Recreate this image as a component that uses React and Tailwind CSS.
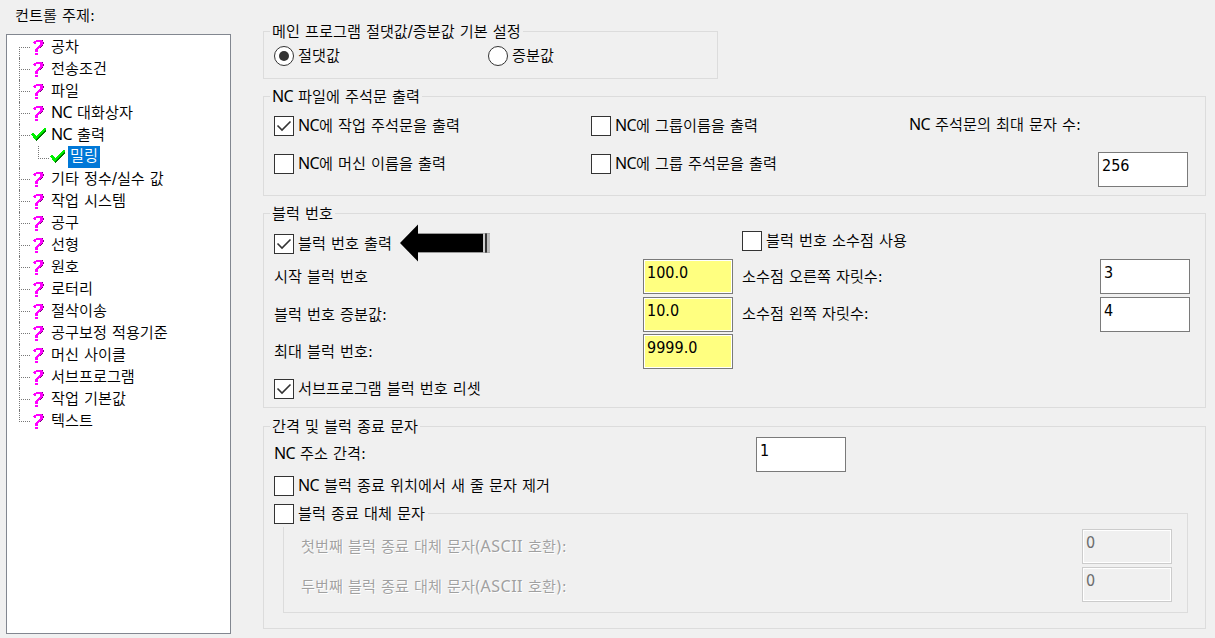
import React from "react";

const topics = [
  { label: "공차" },
  { label: "전송조건" },
  { label: "파일" },
  { label: "NC 대화상자" },
  { label: "NC 출력", checked: true },
  { label: "밀링", checked: true, child: true },
  { label: "기타 정수/실수 값" },
  { label: "작업 시스템" },
  { label: "공구" },
  { label: "선형" },
  { label: "원호" },
  { label: "로터리" },
  { label: "절삭이송" },
  { label: "공구보정 적용기준" },
  { label: "머신 사이클" },
  { label: "서브프로그램" },
  { label: "작업 기본값" },
  { label: "텍스트" },
];

// Latin runs are set slightly larger than the Hangul around them
function Text({ children }) {
  return children.split(/(NC|ASCII|[/:()])/).map((part, i) => {
    if (part === "ASCII") {
      return (
        <span key={i} className="font-['Noto_Sans'] text-[16px] font-normal tracking-[0.5px]">
          {part}
        </span>
      );
    }
    if (part === "NC") {
      return (
        <span key={i} className="font-['Noto_Sans'] text-[16px] leading-[0] font-normal tracking-[-0.6px]">
          {part}
        </span>
      );
    }
    return i % 2 ? (
      <span key={i} className="text-[16.3px]">
        {part}
      </span>
    ) : (
      part
    );
  });
}

function QuestionIcon() {
  return (
    <svg className="block" width="12" height="16" viewBox="0 0 12 16" shapeRendering="crispEdges">
      <path
        d="M3 1h6v1h-6zM1 2h9v1h-9zM0 3h3v1h-3zM1 4h2v1h-2zM7 3h3v3h-3zM6 6h3v1h-3zM5 7h3v1h-3zM4 8h3v1h-3zM3 9h3v1h-3zM2 10h3v3h-3zM2 14h3v2h-3z"
        fill="#ff00ff"
      />
      <path d="M9 1h1v1h-1zM10 3h1v2h-1zM9 6h1v1h-1zM8 7h1v1h-1zM7 8h1v1h-1z" fill="#800080" />
    </svg>
  );
}

function CheckIcon() {
  return (
    <svg className="block" width="16" height="14" viewBox="0 0 16 14" shapeRendering="crispEdges">
      <path d="M0 6l2-1 3 3 9-8h1v2l-9 10-1 1z" fill="#00f000" />
      <path d="M15 1v2l-9 10h-1v-2z" fill="#007800" />
    </svg>
  );
}

function Topic({ label, checked, child, first, last }) {
  return (
    <li className="relative flex h-[22px] items-center">
      <span
        className={
          first
            ? "absolute bottom-0 left-[12px] h-[11px] border-l border-dotted border-[#777]"
            : last
              ? "absolute top-0 left-[12px] h-[12px] border-l border-dotted border-[#777]"
              : "absolute top-0 left-[12px] h-[22px] border-l border-dotted border-[#777]"
        }
      />
      {child ? (
        <span className="mb-[9px] ml-[31px] h-[13px] w-[11px] border-b border-l border-dotted border-[#777]" />
      ) : (
        <span className="mt-px ml-[12px] w-[11px] border-b border-dotted border-[#777]" />
      )}
      <span className={checked ? "ml-px w-4" : "ml-[3px] w-[14px]"}>
        {checked ? <CheckIcon /> : <QuestionIcon />}
      </span>
      {child ? (
        <span className="ml-[2px] h-[22px] w-[32px] bg-[#0078d7] pl-[2px] leading-[21px] text-white">
          {label}
        </span>
      ) : (
        <span className="ml-[4px] h-[22px] leading-[22px]">
          <Text>{label}</Text>
        </span>
      )}
    </li>
  );
}

function Group({ title, className, children }) {
  return (
    <section className={"relative border border-[#dcdcdc] " + className}>
      <h2 className="absolute -top-[11px] left-[6px] bg-[#f0f0f0] px-[2px] leading-[22px]">
        <Text>{title}</Text>
      </h2>
      {children}
    </section>
  );
}

function Checkbox({ label, checked }) {
  return (
    <label className="flex h-5 items-center gap-1">
      <span className="flex h-5 w-5 items-center justify-center border border-[#333] bg-white">
        {checked && (
          <svg width="16" height="12" viewBox="0 0 16 12" fill="none">
            <path d="M1.5 5.5l4.5 4.5L14.500 1.500" stroke="#333" strokeWidth="1.6" />
          </svg>
        )}
      </span>
      <span className="h-5 leading-5">
        <Text>{label}</Text>
      </span>
    </label>
  );
}

function Radio({ label, checked }) {
  return (
    <label className="flex h-5 items-center gap-1">
      <span className="flex h-5 w-5 items-center justify-center rounded-full border border-[#333] bg-white">
        {checked && <span className="h-[10px] w-[10px] rounded-full bg-[#333]" />}
      </span>
      <span className="leading-5">{label}</span>
    </label>
  );
}

function Field({ value, yellow, disabled }) {
  const tone = disabled
    ? "border-[#ccc] bg-[#f0f0f0] text-[#6d6d6d]"
    : yellow
      ? "border-[#7a7a7a] bg-[#ffff80] text-black"
      : "border-[#7a7a7a] bg-white text-black";
  return (
    <div
      className={
        "h-[35px] w-[90px] border pl-[3px] text-[16px] leading-[26px] shadow-[inset_0_0_0_1px_#fff] " + tone
      }
    >
      {value}
    </div>
  );
}

function Arrow() {
  return (
    <svg className="mb-[2px]" width="90" height="38" viewBox="0 0 90 38">
      <path d="M0 19L18 0.500V9.500H83V28.500H18V37.500z" fill="#000" />
      <path d="M18 9h72v1h-72zM18 28h72v1h-72z" fill="#999" />
      <path d="M83 9.500h2v19h-2z" fill="#ccc" />
      <path d="M85 9.500h2v19h-2z" fill="#333" />
      <path d="M87 9.500h3v19h-3z" fill="#bbb" />
    </svg>
  );
}

function App() {
  return (
    <div className="flex h-[638px] w-[1215px] overflow-hidden bg-[#f0f0f0] font-['DejaVu_Sans_Condensed','Noto_Sans_CJK_KR',sans-serif] text-[15.2px] font-[350] whitespace-nowrap text-black [word-spacing:0.7px]">
      <aside className="ml-[6px] w-[225px]">
        <h1 className="h-[34px] pt-[5px] pl-[9px] leading-[22px]">
          <Text>컨트롤 주제:</Text>
        </h1>
        <ul className="h-[600px] border border-[#828790] bg-white pt-px">
          {topics.map((topic, i) => (
            <Topic key={topic.label} {...topic} first={i === 0} last={i === topics.length - 1} />
          ))}
        </ul>
      </aside>

      <main className="ml-[32px] w-[943px] pt-[31px]">
        <Group title="메인 프로그램 절댓값/증분값 기본 설정" className="h-[48px] w-[455px]">
          <div className="flex pt-[14px] pl-[10px]">
            <div className="w-[214px]">
              <Radio label="절댓값" checked />
            </div>
            <Radio label="증분값" />
          </div>
        </Group>

        <Group title="NC 파일에 주석문 출력" className="mt-[17px] h-[100px]">
          <div className="flex pl-[10px]">
            <div className="flex w-[317px] flex-col gap-[18px] pt-[19px]">
              <Checkbox label="NC에 작업 주석문을 출력" checked />
              <Checkbox label="NC에 머신 이름을 출력" />
            </div>
            <div className="flex w-[318px] flex-col gap-[18px] pt-[19px]">
              <Checkbox label="NC에 그룹이름을 출력" />
              <Checkbox label="NC에 그룹 주석문을 출력" />
            </div>
            <div className="pt-[17px]">
              <p className="h-[22px] leading-[22px]">
                <Text>NC 주석문의 최대 문자 수:</Text>
              </p>
              <div className="mt-[16px] ml-[189px]">
                <Field value="256" />
              </div>
            </div>
          </div>
        </Group>

        <Group title="블럭 번호" className="mt-[17px] h-[195px]">
          <div className="flex pl-[10px]">
            <div className="w-[369px] pt-[11px]">
              <div className="flex h-[38px] items-center gap-[8px]">
                <Checkbox label="블럭 번호 출력" checked />
                <Arrow />
              </div>
              <p className="mt-[3px] h-[22px] leading-[22px]">시작 블럭 번호</p>
              <p className="mt-[16px] h-[22px] leading-[22px]">
                <Text>블럭 번호 증분값:</Text>
              </p>
              <p className="mt-[15px] h-[22px] leading-[22px]">
                <Text>최대 블럭 번호:</Text>
              </p>
              <div className="mt-[16px]">
                <Checkbox label="서브프로그램 블럭 번호 리셋" checked />
              </div>
            </div>
            <div className="flex w-[99px] flex-col pt-[45px]">
              <Field value="100.0" yellow />
              <div className="mt-[3px]">
                <Field value="10.0" yellow />
              </div>
              <div className="mt-[2px]">
                <Field value="9999.0" yellow />
              </div>
            </div>
            <div className="w-[358px] pt-[17px]">
              <Checkbox label="블럭 번호 소수점 사용" />
              <p className="mt-[15px] h-[22px] leading-[22px]">
                <Text>소수점 오른쪽 자릿수:</Text>
              </p>
              <p className="mt-[15px] h-[22px] leading-[22px]">
                <Text>소수점 왼쪽 자릿수:</Text>
              </p>
            </div>
            <div className="flex flex-col gap-[3px] pt-[45px]">
              <Field value="3" />
              <Field value="4" />
            </div>
          </div>
        </Group>

        <Group title="간격 및 블럭 종료 문자" className="mt-[18px] h-[203px] pt-[10px] pl-[10px]">
          <div className="flex h-[35px]">
            <p className="w-[482px] pt-[6px] leading-[22px]">
              <Text>NC 주소 간격:</Text>
            </p>
            <Field value="1" />
          </div>
          <div className="mt-[4px]">
            <Checkbox label="NC 블럭 종료 위치에서 새 줄 문자 제거" />
          </div>
          <div className="relative mt-[17px] ml-[9px] h-[100px] w-[905px] border border-[#dcdcdc]">
            <div className="absolute -top-[10px] -left-[10px] bg-[#f0f0f0] pr-[3px] pb-[3px]">
              <Checkbox label="블럭 종료 대체 문자" />
            </div>
            <div className="flex justify-between pt-[15px] pr-[15px] pl-[17px]">
              <div className="text-[#a0a0a0] [text-shadow:1px_1px_0_#fff]">
                <p className="mt-[6px] h-[22px] leading-[22px]">
                  <Text>첫번째 블럭 종료 대체 문자(ASCII 호환):</Text>
                </p>
                <p className="mt-[18px] h-[22px] leading-[22px]">
                  <Text>두번째 블럭 종료 대체 문자(ASCII 호환):</Text>
                </p>
              </div>
              <div className="flex flex-col gap-[3px]">
                <Field value="0" disabled />
                <Field value="0" disabled />
              </div>
            </div>
          </div>
        </Group>
      </main>
    </div>
  );
}

export default App;
